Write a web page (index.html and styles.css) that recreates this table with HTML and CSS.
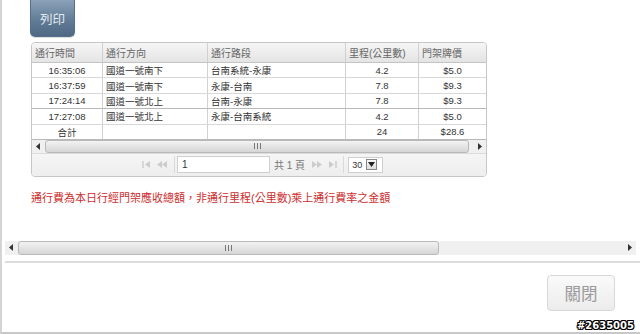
FILE: index.html
```html
<!DOCTYPE html>
<html>
<head>
<meta charset="utf-8">
<link rel="stylesheet" href="styles.css">
</head>
<body>
<div class="page">
  <div class="toolbar"><button class="print">列印</button></div>

  <div class="grid">
    <div class="row head">
      <div class="c">通行時間</div><div class="c">通行方向</div><div class="c">通行路段</div><div class="c">里程(公里數)</div><div class="c">門架牌價</div>
    </div>
    <div class="row">
      <div class="c ctr">16:35:06</div><div class="c">國道一號南下</div><div class="c">台南系統-永康</div><div class="c ctr">4.2</div><div class="c ctr">$5.0</div>
    </div>
    <div class="row">
      <div class="c ctr">16:37:59</div><div class="c">國道一號南下</div><div class="c">永康-台南</div><div class="c ctr">7.8</div><div class="c ctr">$9.3</div>
    </div>
    <div class="row dark">
      <div class="c ctr">17:24:14</div><div class="c">國道一號北上</div><div class="c">台南-永康</div><div class="c ctr">7.8</div><div class="c ctr">$9.3</div>
    </div>
    <div class="row">
      <div class="c ctr">17:27:08</div><div class="c">國道一號北上</div><div class="c">永康-台南系統</div><div class="c ctr">4.2</div><div class="c ctr">$5.0</div>
    </div>
    <div class="row last">
      <div class="c ctr">合計</div><div class="c"></div><div class="c"></div><div class="c ctr">24</div><div class="c ctr">$28.6</div>
    </div>
    <div class="scroll small">
      <div class="arrow"><svg width="5" height="7" viewBox="0 0 5 7"><path d="M4 0L0 3.5L4 7Z" fill="#333"/></svg></div>
      <div class="thumb t1"><svg class="grip" width="7" height="6" viewBox="0 0 7 6"><path d="M0.5 0V6M3.5 0V6M6.5 0V6" stroke="#777"/></svg></div>
      <div class="rest"></div>
      <div class="arrow"><svg width="5" height="7" viewBox="0 0 5 7"><path d="M1 0L5 3.5L1 7Z" fill="#333"/></svg></div>
    </div>
    <div class="pager">
      <span class="nav">
        <svg width="9" height="7" viewBox="0 0 9 7"><path d="M1 0V7" stroke="#bbb"/><path d="M8 0L3 3.5L8 7Z" fill="#ccc"/></svg>
        <svg width="11" height="7" viewBox="0 0 11 7"><path d="M5 0L0 3.5L5 7Z M10 0L5 3.5L10 7Z" fill="#ccc"/></svg>
      </span>
      <span class="sep"></span>
      <span class="input">1</span>
      <span class="total">共 1 頁</span>
      <span class="nav">
        <svg width="11" height="7" viewBox="0 0 11 7"><path d="M1 0L6 3.5L1 7Z M6 0L11 3.5L6 7Z" fill="#ccc"/></svg>
        <svg width="9" height="7" viewBox="0 0 9 7"><path d="M1 0L6 3.5L1 7Z" fill="#ccc"/><path d="M8 0V7" stroke="#bbb"/></svg>
      </span>
      <span class="sep"></span>
      <span class="select">30<span class="drop"><svg width="7" height="5" viewBox="0 0 7 5"><path d="M0 0H7L3.5 5Z" fill="#222"/></svg></span></span>
    </div>
  </div>

  <p class="note">通行費為本日行經門架應收總額，非通行里程(公里數)乘上通行費率之金額</p>

  <div class="scroll big">
    <div class="arrow"><svg width="5" height="7" viewBox="0 0 5 7"><path d="M4 0L0 3.5L4 7Z" fill="#333"/></svg></div>
    <div class="thumb t2"><svg class="grip" width="7" height="6" viewBox="0 0 7 6"><path d="M0.5 0V6M3.5 0V6M6.5 0V6" stroke="#777"/></svg></div>
    <div class="rest"></div>
    <div class="arrow"><svg width="5" height="7" viewBox="0 0 5 7"><path d="M1 0L5 3.5L1 7Z" fill="#333"/></svg></div>
  </div>

  <div class="footer">
    <button class="close">關閉</button>
  </div>
  <div class="mark">#2635005</div>
</div>
</body>
</html>
```

FILE: styles.css
```css
html, body {
  margin: 0;
  padding: 0;
  background: #fff;
}
body {
  font-family: "Liberation Sans", Arial, "Noto Sans CJK TC", sans-serif;
  width: 640px;
  height: 334px;
  overflow: hidden;
}
.page {
  position: relative;
  border-left: 2px solid #d4d4d4;
  border-bottom: 2px solid #c8c8c8;
  box-sizing: border-box;
  height: 334px;
}
.toolbar {
  padding-left: 28px;
  height: 42px;
}
.print {
  width: 45px;
  height: 37px;
  border: 1px solid #54708d;
  border-top: none;
  border-radius: 0 0 5px 5px;
  background: linear-gradient(#8aa1b8, #5f7a95 60%, #4f6884);
  color: #e6ecf2;
  font-family: "Liberation Sans", "Noto Sans CJK TC", sans-serif;
  font-size: 12.5px;
  padding: 0;
  box-shadow: 0 1px 1px rgba(0,0,0,0.15);
}
.grid {
  margin-left: 29px;
  width: 456px;
  border: 1px solid #c6c6c6;
  border-radius: 4px;
  overflow: hidden;
  box-sizing: border-box;
  font-size: 9.5px;
  color: #333;
}
.row {
  display: grid;
  grid-template-columns: 71px 105px 138px 73px 67px;
  height: 15.4px;
  border-bottom: 1px solid #d8d8d8;
  box-sizing: border-box;
}
.row.dark { border-bottom-color: #b8b8b8; }
.row.last { border-bottom: 1px solid #b8b8b8; }
.row.head {
  height: 20px;
  background: linear-gradient(#f6f6f6, #e4e4e4);
  border-bottom: 1px solid #c4c4c4;
  font-size: 10px;
  color: #666;
}
.c {
  border-right: 1px solid #d0d0d0;
  padding-left: 3px;
  white-space: nowrap;
  display: flex;
  align-items: center;
  overflow: hidden;
}
.row .c:last-child { border-right: none; }
.c.ctr { justify-content: center; padding-left: 0; }
.scroll {
  display: flex;
  align-items: stretch;
  background: #f0f0f0;
}
.scroll.small { height: 13px; }
.scroll .arrow {
  width: 13px;
  display: flex;
  align-items: center;
  justify-content: center;
}
.thumb {
  border: 1px solid #b9b9b9;
  border-radius: 3px;
  background: linear-gradient(#f2f2f2, #d6d6d6);
  box-sizing: border-box;
  display: flex;
  align-items: center;
  justify-content: center;
}
.t1 { width: 424px; }
.t2 { width: 421px; }
.rest { flex: 1; }
.pager {
  height: 23px;
  background: linear-gradient(#f5f5f5, #eeeeee);
  border-top: 1px solid #dcdcdc;
  display: flex;
  align-items: center;
  padding-left: 110px;
  box-sizing: border-box;
  font-size: 10px;
  color: #555;
}
.nav {
  display: flex;
  gap: 6px;
  align-items: center;
}
.sep {
  width: 1px;
  height: 17px;
  background: #dadada;
  margin: 0 2px 0 6px;
}
.input {
  width: 93px;
  height: 17px;
  border: 1px solid #cfcfcf;
  background: #fff;
  box-sizing: border-box;
  padding-left: 4px;
  display: flex;
  align-items: center;
  color: #333;
}
.total {
  margin: 0 6px 0 4px;
  color: #777;
}
.select {
  margin-left: 2px;
  width: 35px;
  height: 16px;
  border: 1px solid #cfcfcf;
  background: #fff;
  box-sizing: border-box;
  display: flex;
  align-items: center;
  padding-left: 3px;
  font-size: 9px;
  color: #333;
  gap: 4px;
}
.drop {
  width: 11px;
  height: 11px;
  border: 1px solid #888;
  box-sizing: border-box;
  background: linear-gradient(#fafafa, #ddd);
  display: flex;
  align-items: center;
  justify-content: center;
}
.note {
  margin: 13px 0 0 29px;
  font-size: 11px;
  color: #cc2e2e;
  height: 16px;
  line-height: 16px;
}
.scroll.big {
  margin: 35px 4px 0 3px;
  height: 14px;
}
.footer {
  margin: 6px 0 0 3px;
  border-top: 2px solid #dcdcdc;
  padding: 12px 25px 0 0;
  display: flex;
  justify-content: flex-end;
}
.close {
  width: 68px;
  height: 36px;
  border: 1px solid #d8d8d8;
  border-radius: 4px;
  background: linear-gradient(#fafafa, #ececec);
  color: #9a9a9a;
  font-family: "Liberation Sans", "Noto Sans CJK TC", sans-serif;
  font-size: 16.5px;
  padding: 0;
}
.mark {
  position: absolute;
  right: 6px;
  bottom: 1px;
  font-family: "DejaVu Sans", sans-serif;
  font-weight: bold;
  font-size: 10px;
  color: #fff;
  text-shadow: 1px 0 0 #000, -1px 0 0 #000, 0 1px 0 #000, 0 -1px 0 #000, 1px 1px 0 #000, -1px -1px 0 #000, 1px -1px 0 #000, -1px 1px 0 #000;
}
```
